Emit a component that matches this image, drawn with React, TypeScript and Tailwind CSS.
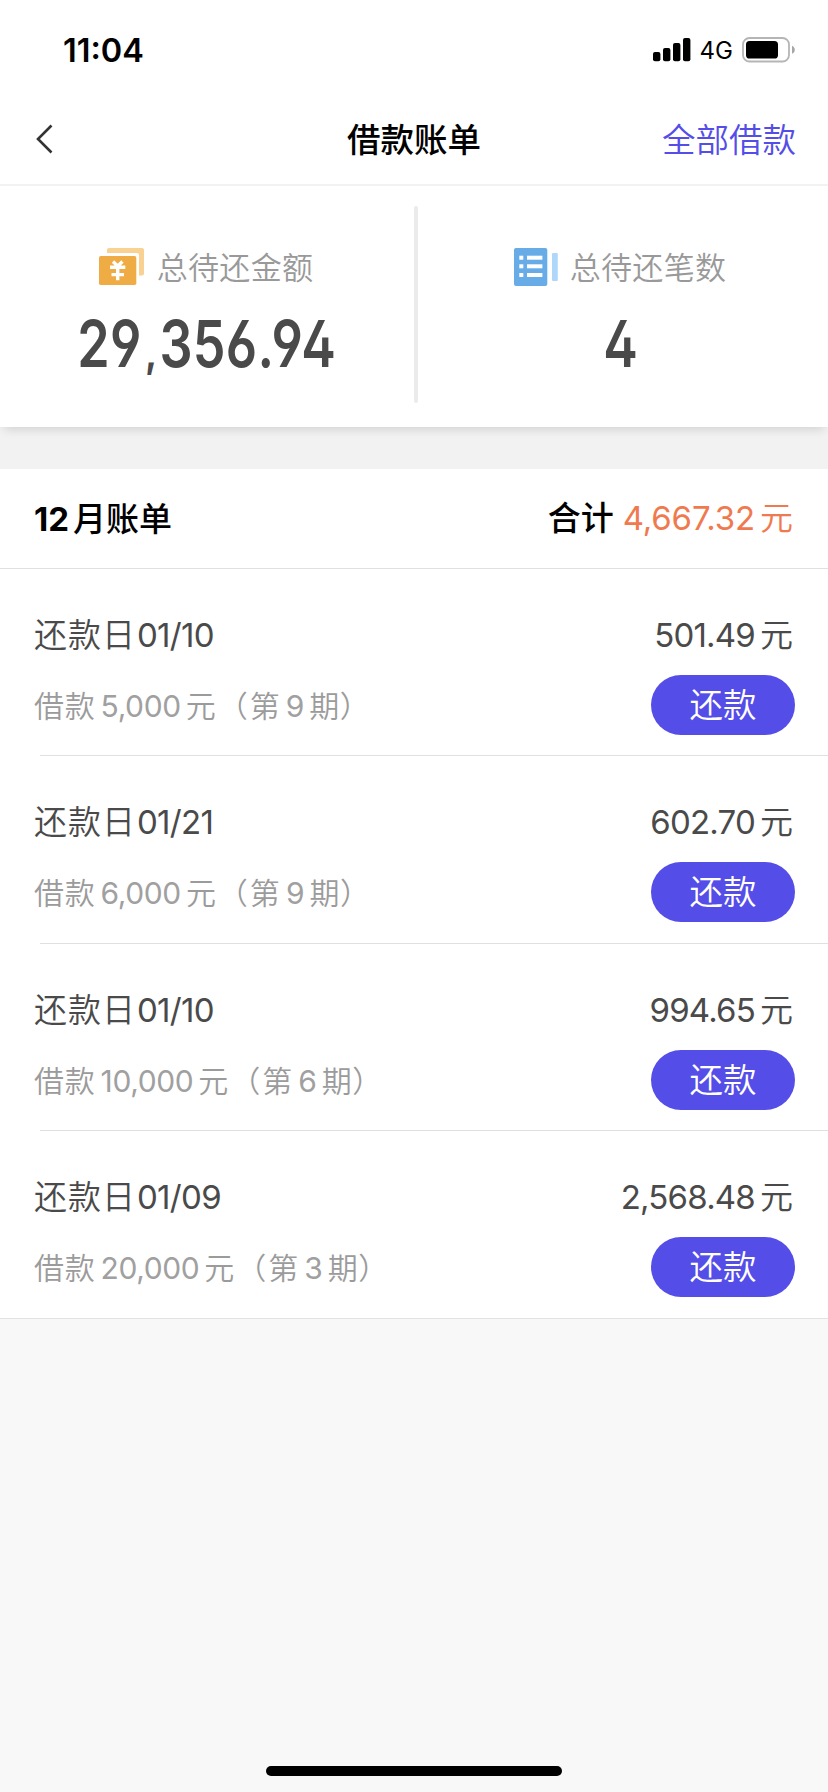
import type { ReactNode } from 'react';

interface Bill {
  id: number;
  date: string;
  amount: string;
  principal: string;
  period: string;
}

const BILLS: Bill[] = [
  { id: 1, date: '01/10', amount: '501.49', principal: '5,000', period: '9' },
  { id: 2, date: '01/21', amount: '602.70', principal: '6,000', period: '9' },
  { id: 3, date: '01/10', amount: '994.65', principal: '10,000', period: '6' },
  { id: 4, date: '01/09', amount: '2,568.48', principal: '20,000', period: '3' },
];

function SignalIcon() {
  return (
    <svg width="38" height="24" viewBox="0 0 38 24" fill="#000">
      <rect x="0" y="14" width="7.4" height="9.2" rx="2" />
      <rect x="10" y="10" width="7.4" height="13.2" rx="2" />
      <rect x="20" y="5" width="7.4" height="18.2" rx="2" />
      <rect x="30" y="0" width="7.4" height="23.2" rx="2" />
    </svg>
  );
}

function BatteryIcon() {
  return (
    <svg width="53" height="26" viewBox="0 0 53 26">
      <rect x="1" y="1" width="46" height="23.5" rx="6.5" fill="none" stroke="#b5b5b5" strokeWidth="1.8" />
      <rect x="4" y="4" width="32" height="17.5" rx="3.6" fill="#000" />
      <path d="M50 8.8c1.8.8 2.8 2.2 2.8 4s-1 3.2-2.8 4z" fill="#a6a6a6" />
    </svg>
  );
}

function MoneyIcon() {
  return (
    <svg width="46" height="38" viewBox="0 0 46 38">
      <path d="M8 5V2a2 2 0 0 1 2-2h33a2 2 0 0 1 2 2v23.5a2 2 0 0 1-2 2h-3V7a2 2 0 0 0-2-2z" fill="#f8d193" />
      <rect x="0" y="8" width="37.3" height="29" rx="1.8" fill="#efab44" />
      <path
        d="M14 13.5l4.7 4.7 4.7-4.7M11 19.2h15.3M12.5 26.6H25M18.7 18v14.3"
        fill="none"
        stroke="#fff"
        strokeWidth="3.4"
      />
    </svg>
  );
}

function ListIcon() {
  return (
    <svg width="44" height="38" viewBox="0 0 44 38">
      <rect x="0" y="0" width="33.3" height="38" rx="2" fill="#67ace7" />
      <rect x="38" y="5" width="5.8" height="28" rx="1" fill="#afd7fa" />
      <g fill="#fff">
        <rect x="5.3" y="7.7" width="4" height="4" />
        <rect x="13" y="7.7" width="15.4" height="4" />
        <rect x="5.3" y="16.3" width="4" height="4" />
        <rect x="13" y="16.3" width="15.4" height="4" />
        <rect x="5.3" y="25" width="4" height="4" />
        <rect x="13" y="25" width="15.4" height="4" />
      </g>
    </svg>
  );
}

function SummaryItem({ icon, label, value }: { icon: ReactNode; label: string; value: string }) {
  const [head, tail] = value.split(',');

  return (
    <div className="flex w-[414px] flex-col items-center pt-[62px]">
      <div className="flex h-[38px] items-center pr-[2px]">
        {icon}
        <span className="mt-[2px] ml-[12px] text-[31px] leading-[38px] font-[350] tracking-[0.3px] text-[#999]">{label}</span>
      </div>
      {/* Condensed figures with open 4, 6 and 9 */}
      <div className="mt-[18px] origin-center scale-x-[0.8] text-[65px] leading-[80px] font-semibold tracking-[0.3px] whitespace-nowrap text-[#4a4a4a] [font-feature-settings:'cv02','cv03','cv04']">
        {head}
        {tail && <span className="mr-[3px] ml-[5px] text-[40px] leading-[40px] font-extrabold">,</span>}
        {tail}
      </div>
    </div>
  );
}

function BillRow({ bill, last }: { bill: Bill; last: boolean }) {
  return (
    <li className={last ? 'border-b border-[#e2e2e2]' : ''}>
      <div className="flex h-[186.4px] justify-between pr-[33px] pl-[34px]">
        <div className="pt-[43px]">
          <p className="text-[33px] leading-[46px] font-[350] text-[#4a4a4a]">
            <span className="mr-[1px] tracking-[1px]">还款日</span>
            <span className="font-normal tracking-[-0.7px]">{bill.date}</span>
          </p>
          <p className="mt-[26px] text-[30px] leading-[44px] font-[350] text-[#9b9b9b]">
            <span className="tracking-[0.8px]">借款</span>
            <span className="mr-[5px] ml-[5px] font-normal tracking-[-0.4px] text-[#a0a0a0]">{bill.principal}</span>
            <span className="tracking-[2px]">元（第</span>
            <span className="mr-[5px] ml-[4px] font-normal text-[#a0a0a0]">{bill.period}</span>
            <span className="tracking-[0.5px]">期）</span>
          </p>
        </div>
        <div className="flex flex-col items-end pt-[43px]">
          <p className="pr-[2px] text-[33px] leading-[46px] font-[350] text-[#4a4a4a]">
            <span className="mr-[5px] font-normal tracking-[-0.8px]">{bill.amount}</span>元
          </p>
          <button className="mt-[17px] flex h-[60px] w-[144px] items-center justify-center rounded-full bg-[#544de8] text-[33.5px] leading-[60px] font-[350] text-white">
            还款
          </button>
        </div>
      </div>
      {!last && <div className="ml-[40px] h-px bg-[#e0e0e0]" />}
    </li>
  );
}

export default function App() {
  return (
    <div className="flex h-[1792px] w-[828px] flex-col bg-[#f8f8f8] font-['Inter','Noto_Sans_CJK_SC',sans-serif] text-black">
      {/* Status bar */}
      <div className="flex h-[96px] items-center justify-between bg-white pt-[3px] pr-[33px] pl-[63px]">
        <span className="pt-[2px] text-[32.5px] leading-[40px] font-semibold">11:04</span>
        <div className="flex items-center">
          <SignalIcon />
          <span className="ml-[9px] pt-[3px] text-[24px] leading-[30px]">4G</span>
          <span className="ml-[9px]">
            <BatteryIcon />
          </span>
        </div>
      </div>

      {/* Nav bar */}
      <div className="grid h-[90px] grid-cols-3 items-center border-b-2 border-[#f2f2f2] bg-white px-[32px]">
        <svg className="mb-[2px] ml-[4px]" width="17" height="30" viewBox="0 0 17 30" fill="none" stroke="#333" strokeWidth="2.6">
          <path d="M15.5 1.5L2 15l13.5 13.5" />
        </svg>
        <h1 className="text-center text-[33.5px] leading-[44px] font-medium">借款账单</h1>
        <a className="text-right text-[33.5px] leading-[44px] font-[350] text-[#544de8]">全部借款</a>
      </div>

      {/* Summary */}
      <div className="relative flex h-[241px] bg-white shadow-[0_6px_10px_-4px_rgba(0,0,0,0.15)]">
        <SummaryItem icon={<MoneyIcon />} label="总待还金额" value="29,356.94" />
        <div className="mt-[20px] -mr-[4px] h-[197px] w-[4px] rounded-full bg-[#ebebeb]" />
        <SummaryItem icon={<ListIcon />} label="总待还笔数" value="4" />
      </div>
      <div className="h-[42px] bg-[#f2f2f2]" />

      {/* Bills of the month */}
      <div className="flex h-[100px] items-center justify-between border-b border-[#e0e0e0] bg-white pr-[33px] pl-[34px]">
        <h2 className="text-[33px] leading-[46px] font-bold">
          <span className="mr-[4px]">12</span>
          <span className="font-medium">月账单</span>
        </h2>
        <p className="pr-[2px] pb-[2px] text-[33px] leading-[46px] font-[350] text-[#f07a4f]">
          <span className="mr-[9px] font-medium text-black">合计</span>
          <span className="mr-[5px] font-normal tracking-[-0.15px]">4,667.32</span>元
        </p>
      </div>
      <ul className="bg-white">
        {BILLS.map((bill, i) => (
          <BillRow key={bill.id} bill={bill} last={i === BILLS.length - 1} />
        ))}
      </ul>

      {/* Home indicator */}
      <div className="mx-auto mt-auto mb-[16px] h-[10px] w-[296px] rounded-full bg-black" />
    </div>
  );
}
